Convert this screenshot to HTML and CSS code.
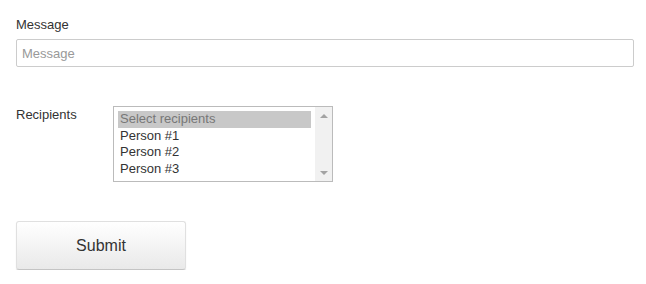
FILE: index.html
```html
<!DOCTYPE html>
<html lang="en">
<head>
    <meta charset="UTF-8">
    <title>Send Message</title>
    <link rel="stylesheet" href="styles.css">
</head>
<body>
    <form class="msg-form">
        <div class="form-group">
            <label for="message">Message</label>
            <input type="text" id="message" placeholder="Message">
        </div>

        <div class="form-row">
            <label class="row-label">Recipients</label>
            <div class="listbox">
                <div class="options">
                    <div class="option selected">Select recipients</div>
                    <div class="option">Person #1</div>
                    <div class="option">Person #2</div>
                    <div class="option">Person #3</div>
                </div>
                <div class="scrollbar">
                    <span class="arrow up"></span>
                    <span class="arrow down"></span>
                </div>
            </div>
        </div>

        <button type="button" class="submit-btn">Submit</button>
    </form>
</body>
</html>
```

FILE: styles.css
```css
* {
    margin: 0;
    padding: 0;
    box-sizing: border-box;
}

body {
    font-family: "Liberation Sans", Arial, sans-serif;
    font-size: 13px;
    color: #333;
    background: #fff;
    padding: 17px 12px 0 16px;
}

.msg-form {
    display: flex;
    flex-direction: column;
}

.form-group label {
    display: block;
    line-height: 15px;
    margin-bottom: 7px;
}

input[type="text"] {
    width: 100%;
    height: 28px;
    padding: 0 5px;
    border: 1px solid #ccc;
    border-radius: 2px;
    font-family: inherit;
    font-size: 13px;
    color: #333;
}

input[type="text"]::placeholder {
    color: #999;
}

.form-row {
    display: flex;
    align-items: flex-start;
    margin-top: 39px;
}

.row-label {
    width: 97px;
    line-height: 15px;
    margin-top: 1px;
}

.listbox {
    display: flex;
    width: 220px;
    height: 76px;
    border: 1px solid #bbb;
    background: #fff;
}

.options {
    flex: 1;
    padding: 4px 4px 0 4px;
}

.option {
    height: 16.5px;
    line-height: 16.5px;
    padding-left: 2px;
    color: #333;
    white-space: nowrap;
}

.option.selected {
    background: #c8c8c8;
    color: #777;
}

.scrollbar {
    width: 17px;
    background: #f1f1f1;
    display: flex;
    flex-direction: column;
    justify-content: space-between;
    align-items: center;
    padding: 7px 0 6px;
}

.arrow {
    width: 0;
    height: 0;
    border-left: 4px solid transparent;
    border-right: 4px solid transparent;
}

.arrow.up {
    border-bottom: 4px solid #a3a3a3;
}

.arrow.down {
    border-top: 4px solid #a3a3a3;
}

.submit-btn {
    width: 170px;
    height: 49px;
    margin-top: 39px;
    border: 1px solid #e0e0e0;
    border-bottom-color: #c4c4c4;
    border-radius: 3px;
    background: linear-gradient(to bottom, #ffffff 0%, #e9e9e9 100%);
    box-shadow: 0 1px 1px rgba(0,0,0,0.12);
    font-family: inherit;
    font-size: 16px;
    color: #333;
    cursor: pointer;
}
```
